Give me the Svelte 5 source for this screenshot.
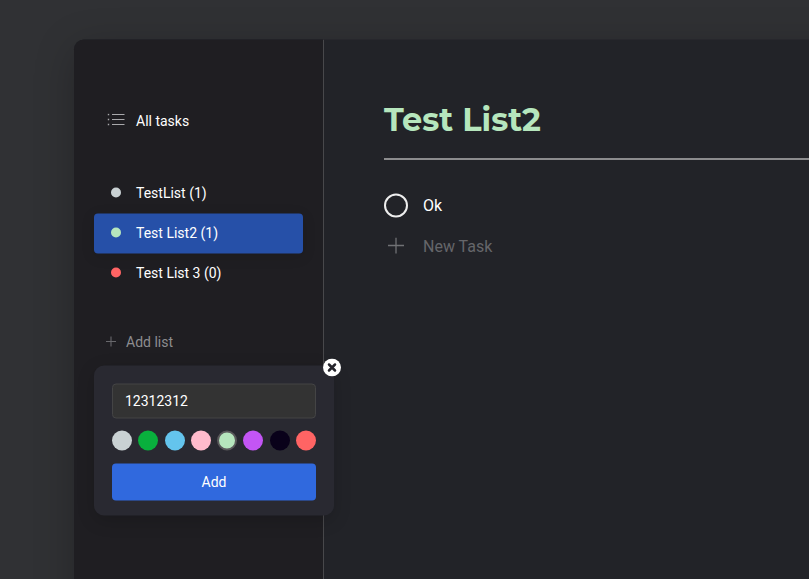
<script>
  const lists = [
    { name: 'TestList', count: 1, color: '#c9d1d3' },
    { name: 'Test List2', count: 1, color: '#b6e6bd', active: true },
    { name: 'Test List 3', count: 0, color: '#ff6464' }
  ];
  const colors = ['#c9d1d3', '#09b03d', '#64c4ed', '#ffbbcc', '#b6e6bd', '#c355f5', '#09011a', '#ff6464'];
  let selected = $state(4);
  let name = $state('12312312');
</script>

<div class="page">
  <div class="todo">
    <aside>
      <div class="all">
        <svg width="18" height="14" viewBox="0 0 18 14">
          <path d="M5 1H17.5M5 6H17.5M5 11H17.5" stroke="#a8a8ab" stroke-width="1.2" />
          <path d="M.8 1H2.2M.8 6H2.2M.8 11H2.2" stroke="#a8a8ab" stroke-width="1.3" />
        </svg>
        <span>All tasks</span>
      </div>
      <ul>
        {#each lists as l}
          <li class:active={l.active}>
            <i style="background:{l.color}"></i>
            <span>{l.name} ({l.count})</span>
          </li>
        {/each}
      </ul>
      <div class="addlist">
        <svg width="12" height="12" viewBox="0 0 12 12"><path d="M6 1V11M1 6H11" stroke="#68686c" stroke-width="1.1" /></svg>
        <span>Add list</span>
      </div>
      <div class="popup">
        <button class="close" aria-label="Close">
          <svg width="18" height="18" viewBox="0 0 18 18">
            <circle cx="9" cy="9" r="9" fill="#fff" />
            <path d="M6 6L12 12M12 6L6 12" stroke="#25252c" stroke-width="2.5" stroke-linecap="round" />
          </svg>
        </button>
        <input bind:value={name} />
        <div class="colors">
          {#each colors as c, n}
            <button class="dot" class:selected={selected === n} style="background:{c}" aria-label="Color {n + 1}" onclick={() => (selected = n)}></button>
          {/each}
        </div>
        <button class="add">Add</button>
      </div>
    </aside>
    <main>
      <h1>Test List2</h1>
      <div class="task">
        <span class="check"></span>
        <span class="label">Ok</span>
      </div>
      <div class="newtask">
        <svg width="24" height="18" viewBox="0 0 24 18"><path d="M12 0V16M4 8H20" stroke="#707174" stroke-width="1.3" /></svg>
        <span class="label">New Task</span>
      </div>
    </main>
  </div>
</div>

<style>
  :global(body) { overflow: hidden; background: #303134; }
  * { box-sizing: border-box; }
  .page {
    height: 579px;
    padding: 39px 0 0 74px;
    overflow: hidden;
    background: #303134;
    font-family: Roboto, sans-serif;
    font-size: 14px;
    color: #fff;
  }
  .todo {
    display: flex;
    width: 900px;
    height: 700px;
    border-radius: 10px;
    background: #222328;
    box-shadow: 2px 11px 40px rgba(0, 0, 0, 0.25);
    transform: translateY(0.5px);
  }
  aside {
    width: 250px;
    flex: none;
    padding: 60px 20px;
    border-right: 1px solid #48484b;
    border-radius: 10px 0 0 10px;
    background: #1f1e22;
  }
  .all {
    display: flex;
    align-items: center;
    height: 40px;
    padding-left: 13px;
    gap: 11px;
  }
  .all svg { margin-top: 1px; }
  .all span { margin-top: 2px; }
  ul { list-style: none; margin: 34px 0 0; padding: 0; }
  li {
    display: flex;
    align-items: center;
    height: 40px;
    padding-left: 17px;
    gap: 15px;
    border-radius: 4px;
  }
  li span { padding-bottom: 2px; }
  li.active { background: #2650a8; box-shadow: 0 3px 14px rgba(0, 0, 0, 0.12); }
  li i { width: 10px; height: 10px; border-radius: 50%; margin-top: -2px; }
  .addlist {
    display: flex;
    align-items: center;
    height: 20px;
    margin-top: 38px;
    padding-left: 11px;
    gap: 9px;
    color: #8d8d90;
  }
  .popup {
    position: relative;
    width: 240px;
    height: 150px;
    margin-top: 14px;
    padding: 18px;
    border-radius: 10px;
    background: #292931;
    box-shadow: 0 5px 18px rgba(0, 0, 0, 0.16);
  }
  button { padding: 0; border: 0; font: inherit; color: #fff; }
  .close { position: absolute; top: -7px; right: -7px; width: 18px; height: 18px; background: none; }
  .close svg { display: block; }
  input {
    display: block;
    width: 204px;
    height: 35px;
    padding: 0 12px 2px;
    border: 1px solid #444445;
    border-radius: 4px;
    outline: none;
    background: #333333;
    color: #fff;
    font: inherit;
  }
  .colors { display: flex; justify-content: space-between; margin: 12px 0 13px; }
  .dot { width: 20px; height: 20px; border-radius: 50%; }
  .dot.selected { border: 2px solid #5a595b; }
  .add { width: 204px; height: 37px; padding-bottom: 2px; border-radius: 4px; background: #3069de; }
  main { flex: 1; padding: 60px 0 0 60px; }
  h1 {
    height: 60px;
    margin: 0 0 34px;
    border-bottom: 2px solid #8c8c8e;
    font: 700 32px/40px Montserrat, Inter, sans-serif;
    color: #b6e6bd;
    transform: translateY(0.5px);
  }
  .task, .newtask { display: flex; align-items: center; height: 24px; gap: 15px; font-size: 16px; }
  .label { padding-bottom: 2px; }
  .check { width: 24px; height: 24px; border: 2px solid #eee; border-radius: 50%; }
  .newtask { margin-top: 17px; color: #65666a; }
</style>
